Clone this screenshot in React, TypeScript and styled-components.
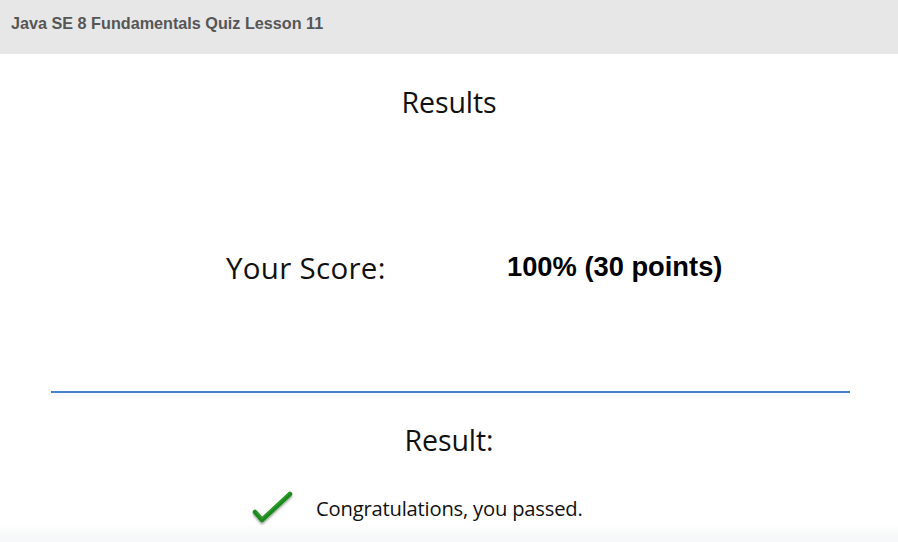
import React from "react";
import styled, { createGlobalStyle } from "styled-components";

const Global = createGlobalStyle`
  html, body { margin: 0; padding: 0; background: #ffffff; }
  body { width: 898px; height: 542px; overflow: hidden; }
`;

const Page = styled.div`
  width: 898px;
  height: 542px;
  display: flex;
  flex-direction: column;
  background: linear-gradient(to bottom, #ffffff 0, #ffffff 524px, #f7f8f9 536px, #f7f8f9 542px);
`;

const Header = styled.div`
  height: 54px;
  flex: 0 0 54px;
  background: #e7e7e7;
  display: flex;
  align-items: center;
  padding-left: 11px;
  padding-bottom: 7px;
  box-sizing: border-box;
  font-family: "Liberation Sans", Arial, sans-serif;
  font-weight: bold;
  font-size: 16.2px;
  color: #565656;
`;

const Heading = styled.div<{ $top: number }>`
  margin-top: ${(p) => p.$top}px;
  text-align: center;
  font-family: "Open Sans", "Noto Sans", sans-serif;
  font-size: 28.5px;
  line-height: 34px;
  color: #111;
  letter-spacing: -0.1px;
`;

const ScoreRow = styled.div`
  margin-top: 131px;
  display: flex;
  align-items: center;
  height: 34px;
  padding-left: 226px;
`;

const ScoreLabel = styled.div`
  width: 281px;
  font-family: "Open Sans", "Noto Sans", sans-serif;
  font-size: 29.5px;
  color: #111;
  letter-spacing: 0.3px;
`;

const ScoreValue = styled.div`
  font-family: "Liberation Sans", Arial, sans-serif;
  font-weight: bold;
  font-size: 27.3px;
  color: #000;
`;

const Divider = styled.div`
  margin: 107px 0 0 51px;
  width: 799px;
  height: 2px;
  background: #4a80c8;
  box-shadow: 0 3px 4px rgba(0, 0, 0, 0.08);
`;

const MessageRow = styled.div`
  margin-top: 33px;
  display: flex;
  align-items: center;
  padding-left: 252px;
  gap: 22px;
`;

const MessageText = styled.div`
  font-family: "Open Sans", "Noto Sans", sans-serif;
  font-size: 20.2px;
  color: #111;
  letter-spacing: -0.2px;
`;

const Check = () => (
  <svg width="42" height="36" viewBox="0 0 42 36">
    <defs>
      <filter id="sh" x="-30%" y="-30%" width="160%" height="160%">
        <feDropShadow dx="0" dy="2" stdDeviation="1.3" floodColor="#000" floodOpacity="0.35" />
      </filter>
    </defs>
    <path
      d="M3 22 L10 30 L38 4"
      fill="none"
      stroke="#1d8a1d"
      strokeWidth="4.5"
      strokeLinecap="round"
      strokeLinejoin="round"
      filter="url(#sh)"
    />
    <path d="M5 22 L10 28 L37 3" fill="none" stroke="#3aa83a" strokeWidth="1.5" strokeLinecap="round" opacity="0.6" />
  </svg>
);

export default function App() {
  return (
    <>
      <Global />
      <Page>
        <Header>Java SE 8 Fundamentals Quiz Lesson 11</Header>
        <Heading $top={31}>Results</Heading>
        <ScoreRow>
          <ScoreLabel>Your Score:</ScoreLabel>
          <ScoreValue>100% (30 points)</ScoreValue>
        </ScoreRow>
        <Divider />
        <Heading $top={30}>Result:</Heading>
        <MessageRow>
          <Check />
          <MessageText>Congratulations, you passed.</MessageText>
        </MessageRow>
      </Page>
    </>
  );
}
